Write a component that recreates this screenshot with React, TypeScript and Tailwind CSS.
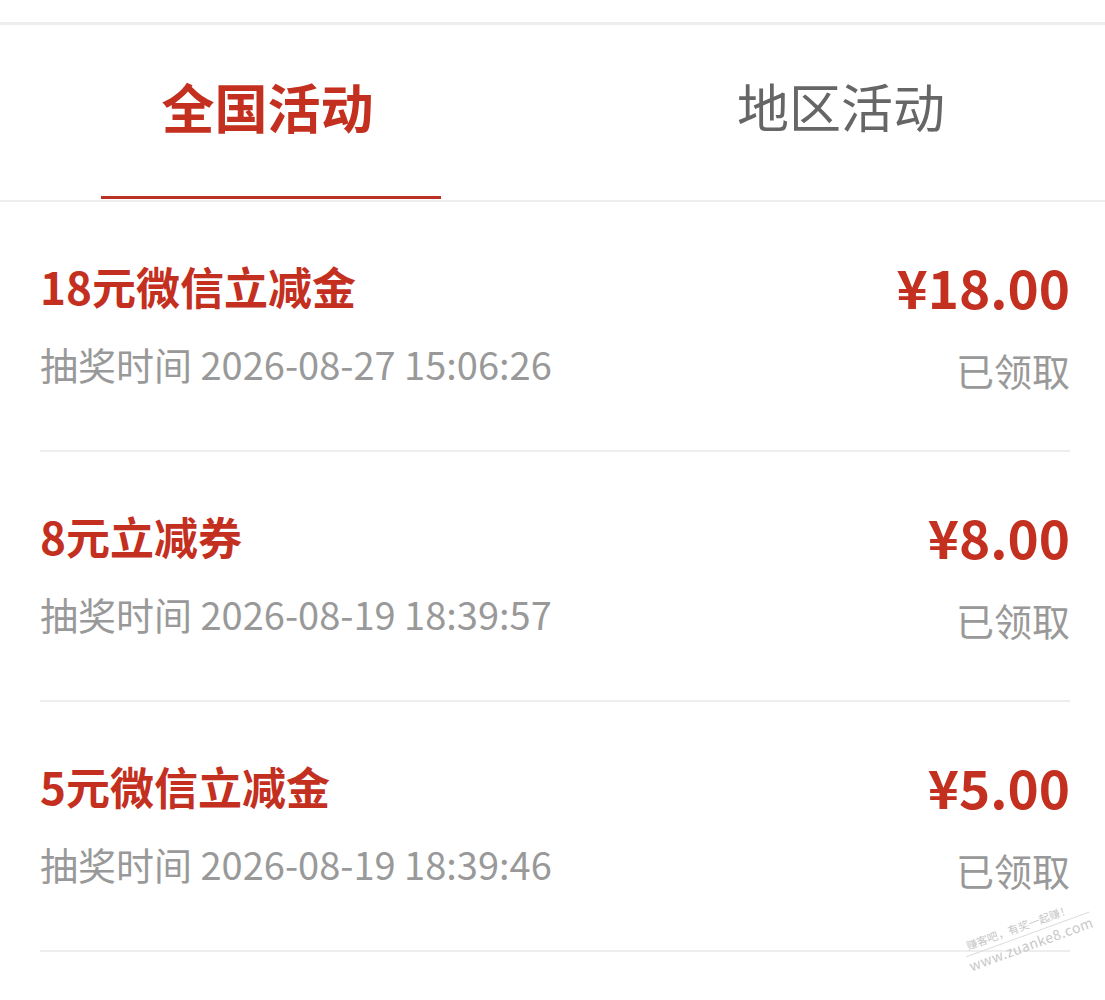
const records = [
  { title: '18元微信立减金', time: '2026-08-27 15:06:26', amount: '¥18.00' },
  { title: '8元立减券', time: '2026-08-19 18:39:57', amount: '¥8.00' },
  { title: '5元微信立减金', time: '2026-08-19 18:39:46', amount: '¥5.00' },
]

export default function App() {
  return (
    <div
      className="relative w-[1105px] h-[1000px] overflow-hidden bg-white"
      style={{ fontFamily: '"Noto Sans CJK SC", "Noto Sans", sans-serif' }}
    >
      <div className="h-[22px]" />
      <div className="h-[3px] bg-[#eeeeee]" />

      {/* tabs */}
      <div className="relative flex h-[177px] items-center border-b-2 border-[#eeeeee] pb-[12px]">
        <div className="flex w-[535px] justify-center">
          <span className="text-[53px] font-bold leading-none text-[#c4301f]">全国活动</span>
        </div>
        <div className="pl-[202px]">
          <span className="text-[52px] leading-none text-[#666666]">地区活动</span>
        </div>
        <div className="absolute bottom-[1px] left-[101px] h-[3px] w-[340px] bg-[#b93224]" />
      </div>

      {/* list */}
      <div className="pl-[40px] pr-[35px]">
        {records.map(r => (
          <div key={r.time} className="flex justify-between border-b-2 border-[#eeeeee] pt-[58px] pb-[63px]">
            <div className="flex flex-col">
              <div className="h-[52px] text-[44px] font-bold leading-[52px] text-[#c4301f]">{r.title}</div>
              <div className="mt-[29px] h-[46px] text-[38px] leading-[46px] text-[#999999]">抽奖时间 {r.time}</div>
            </div>
            <div className="flex flex-col items-end">
              <div className="h-[52px] text-[53px] font-bold leading-[52px] text-[#c4301f]">{r.amount}</div>
              <div className="mt-[29px] h-[46px] text-[38px] leading-[58px] text-[#999999]">已领取</div>
            </div>
          </div>
        ))}
      </div>

      {/* watermark */}
      <div className="pointer-events-none absolute left-[962px] top-[914px] -rotate-[20deg] text-[11px] leading-[20px] text-[#c8c8c8]">
        <div className="pl-[4px]">赚客吧，有奖一起赚！</div>
        <div className="border-t border-[#dddddd] text-[14px] leading-[18px] tracking-[0.5px]">www.zuanke8.com</div>
      </div>
    </div>
  )
}
